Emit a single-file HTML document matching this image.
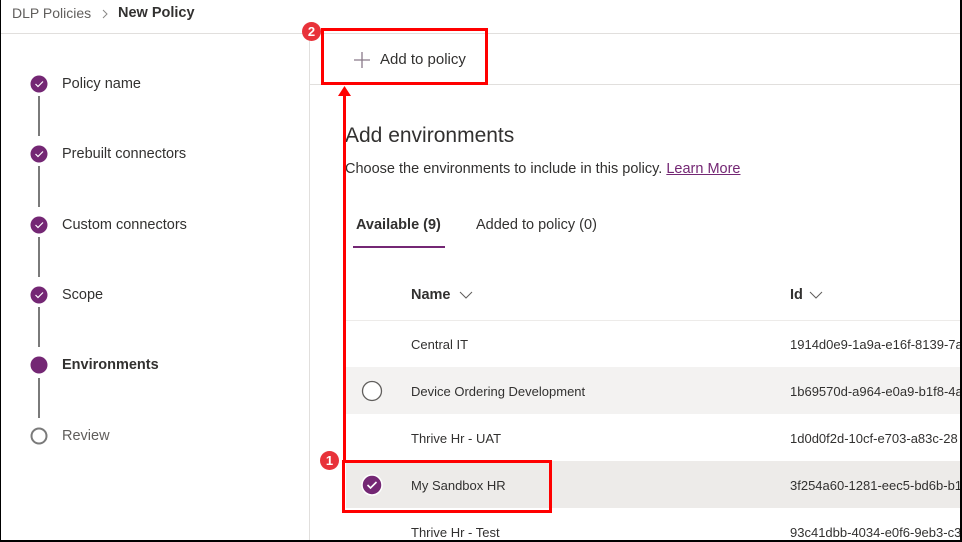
<!DOCTYPE html>
<html><head><style>
*{margin:0;padding:0;box-sizing:border-box}
body{width:962px;height:542px;overflow:hidden;background:#fff;font-family:"Segoe UI","Liberation Sans",sans-serif;color:#323130;position:relative}
.a{position:absolute;white-space:nowrap}
.ln{position:absolute;left:38px;width:2px;background:#7a7a7a}
.row{position:absolute;left:346px;width:616px;height:47px}
.t{font-size:13px;color:#323130}
.badge{position:absolute;width:19px;height:19px;border-radius:50%;background:#e8323a;color:#fff;font-size:13px;font-weight:bold;text-align:center;line-height:19px;font-family:"Liberation Sans",sans-serif}
</style></head><body>
<div class="a" style="left:12px;top:5px;font-size:14px;color:#605e5c">DLP Policies</div>
<svg class="a" style="left:101px;top:9px" width="8" height="10"><path d="M2 1l4 4-4 4" fill="none" stroke="#8a8886" stroke-width="1"/></svg>
<div class="a" style="left:118px;top:5px;font-size:14.5px;font-weight:600;color:#323130">New Policy</div>
<div class="a" style="left:0;top:33px;width:962px;height:1px;background:#e1dfdd"></div>
<div class="a" style="left:309px;top:34px;width:1px;height:508px;background:#e1dfdd"></div>
<div class="a" style="left:310px;top:84px;width:652px;height:1px;background:#e1dfdd"></div>

<div class="ln" style="top:96px;height:40px"></div>
<div class="ln" style="top:166px;height:41px"></div>
<div class="ln" style="top:237px;height:40px"></div>
<div class="ln" style="top:307px;height:40px"></div>
<div class="ln" style="top:378px;height:40px"></div>
<svg class="a" style="left:0;top:0" width="60" height="460">
<g fill="#742774"><circle cx="39" cy="84" r="8.5"/><circle cx="39" cy="154" r="8.5"/><circle cx="39" cy="225" r="8.5"/><circle cx="39" cy="295" r="8.5"/><circle cx="39" cy="365" r="8.5"/></g>
<g fill="none" stroke="#fff" stroke-width="1.2"><path d="M35.5 84l2.5 2.5 5-5"/><path d="M35.5 154l2.5 2.5 5-5"/><path d="M35.5 225l2.5 2.5 5-5"/><path d="M35.5 295l2.5 2.5 5-5"/></g>
<circle cx="39" cy="436" r="7.5" fill="#fff" stroke="#7a7a7a" stroke-width="2"/>
</svg>
<div class="a" style="left:62px;top:76px;font-size:14.5px">Policy name</div>
<div class="a" style="left:62px;top:146px;font-size:14.5px">Prebuilt connectors</div>
<div class="a" style="left:62px;top:217px;font-size:14.5px">Custom connectors</div>
<div class="a" style="left:62px;top:287px;font-size:14.5px">Scope</div>
<div class="a" style="left:62px;top:357px;font-size:14.5px;font-weight:600">Environments</div>
<div class="a" style="left:62px;top:428px;font-size:14.5px;color:#605e5c">Review</div>

<svg class="a" style="left:353px;top:51px" width="18" height="18"><path d="M9 1v16M1 9h16" stroke="#8a7a8a" stroke-width="1.3"/></svg>
<div class="a" style="left:380px;top:51px;font-size:15px">Add to policy</div>

<div class="a" style="left:345px;top:124px;font-size:21px">Add environments</div>
<div class="a" style="left:345px;top:161px;font-size:14.5px">Choose the environments to include in this policy. <span style="color:#742774;text-decoration:underline">Learn More</span></div>
<div class="a" style="left:356px;top:217px;font-size:14.5px;font-weight:600">Available (9)</div>
<div class="a" style="left:353px;top:246px;width:92px;height:2px;background:#742774"></div>
<div class="a" style="left:476px;top:217px;font-size:14.5px">Added to policy (0)</div>

<div class="a" style="left:411px;top:287px;font-size:14.5px;font-weight:600">Name</div>
<svg class="a" style="left:459px;top:291px" width="14" height="8"><path d="M1 1l6 6 6-6" fill="none" stroke="#605e5c" stroke-width="1"/></svg>
<div class="a" style="left:790px;top:287px;font-size:14.5px;font-weight:600">Id</div>
<svg class="a" style="left:809px;top:291px" width="14" height="8"><path d="M1 1l6 6 6-6" fill="none" stroke="#605e5c" stroke-width="1"/></svg>
<div class="a" style="left:346px;top:320px;width:616px;height:1px;background:#edebe9"></div>

<div class="row" style="top:367px;background:#f3f2f1"></div>
<div class="row" style="top:461px;background:#edebe9"></div>
<div class="a t" style="left:411px;top:337px">Central IT</div><div class="a t" style="left:790px;top:337px">1914d0e9-1a9a-e16f-8139-7a</div>
<div class="a t" style="left:411px;top:384px">Device Ordering Development</div><div class="a t" style="left:790px;top:384px">1b69570d-a964-e0a9-b1f8-4a</div>
<div class="a t" style="left:411px;top:431px">Thrive Hr - UAT</div><div class="a t" style="left:790px;top:431px">1d0d0f2d-10cf-e703-a83c-28</div>
<div class="a t" style="left:411px;top:478px">My Sandbox HR</div><div class="a t" style="left:790px;top:478px">3f254a60-1281-eec5-bd6b-b1</div>
<div class="a t" style="left:411px;top:525px">Thrive Hr - Test</div><div class="a t" style="left:790px;top:525px">93c41dbb-4034-e0f6-9eb3-c3</div>
<svg class="a" style="left:360px;top:379px" width="24" height="120">
<circle cx="12" cy="12" r="9.5" fill="#fff" stroke="#605e5c" stroke-width="1.3"/>
<circle cx="12" cy="106" r="10" fill="#742774" stroke="#fff" stroke-width="1.5"/>
<path d="M7.5 106l3 3 6-6" fill="none" stroke="#fff" stroke-width="1.6"/>
</svg>

<div class="a" style="left:321px;top:28px;width:167px;height:57px;border:3px solid #f00"></div>
<div class="a" style="left:342px;top:460px;width:210px;height:53px;border:3px solid #f00"></div>
<svg class="a" style="left:335px;top:84px" width="20" height="378"><path d="M9.5 8v370" stroke="#f00" stroke-width="3"/><path d="M3 12L9.5 2 16 12z" fill="#f00"/></svg>
<div class="badge" style="left:302px;top:22px">2</div>
<div class="badge" style="left:320px;top:451px">1</div>

<div class="a" style="left:0;top:0;width:962px;height:542px;border-left:1px solid #000;border-bottom:2px solid #000;border-right:2px solid #000"></div>
</body></html>
